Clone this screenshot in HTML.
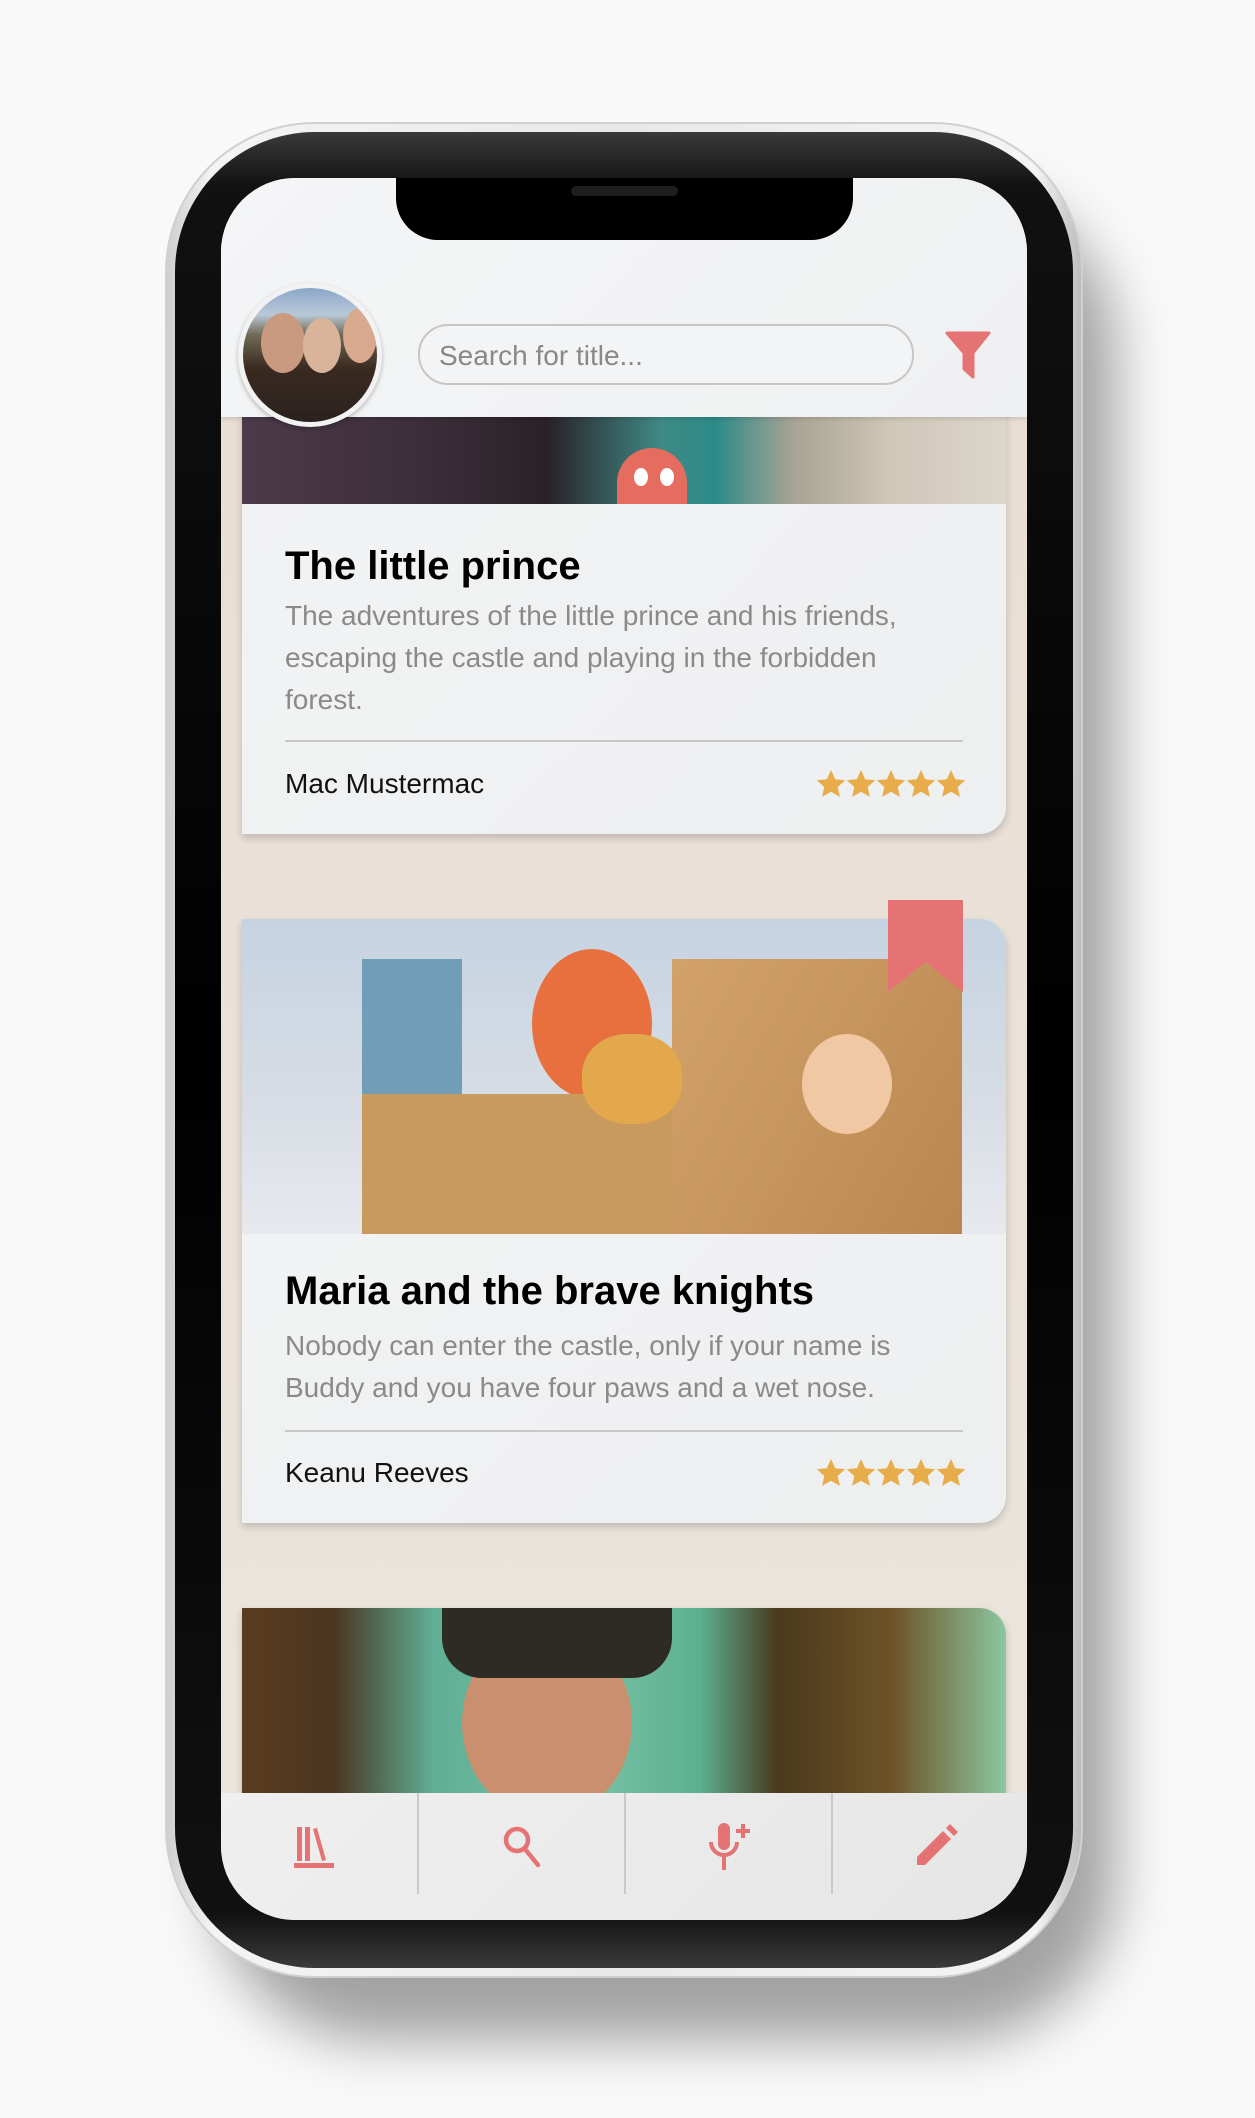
<!DOCTYPE html>
<html><head><meta charset="utf-8"><style>
*{margin:0;padding:0;box-sizing:border-box}
body{width:1255px;height:2118px;background:#f9f9f9;position:relative;overflow:hidden;font-family:"Liberation Sans",sans-serif}
.abs{position:absolute}
.shadow{left:215px;top:190px;width:900px;height:1850px;border-radius:160px;background:rgba(0,0,0,0.35);filter:blur(28px)}
.frame{left:165px;top:122px;width:918px;height:1856px;border-radius:150px;background:linear-gradient(90deg,#cfcfcf,#f4f4f4 5%,#e8e8e8 50%,#f4f4f4 95%,#bdbdbd);border:2px solid #d0d0d0}
.bezel{left:175px;top:132px;width:898px;height:1836px;border-radius:140px;background:linear-gradient(180deg,#3a3a3a,#111 3%,#000 50%,#111 97%,#3a3a3a)}
.screen{left:221px;top:178px;width:806px;height:1742px;border-radius:74px;overflow:hidden;background:linear-gradient(180deg,#e8ddd2,#ebe5de)}
.card{position:absolute;left:21px;width:764px;background:linear-gradient(135deg,#f2f3f4,#eeeff0);box-shadow:0 4px 8px rgba(0,0,0,0.18);overflow:hidden}
.title{position:absolute;left:43px;font-weight:bold;font-size:40px;color:#000;white-space:nowrap}
.desc{position:absolute;left:43px;width:665px;font-size:28px;line-height:42px;color:#8a8a8a}
.div{position:absolute;left:43px;width:678px;height:2px;background:#c8c8c8}
.author{position:absolute;left:43px;font-size:28px;color:#111}
.stars{position:absolute;left:574px}
.nav{left:0;top:1615px;width:806px;height:127px;background:linear-gradient(135deg,#efefef,#e6e6e6)}
.sep{position:absolute;top:0;width:2px;height:101px;background:#c9c9c9}
</style></head><body>
<div class="abs shadow"></div>
<div class="abs frame"></div>
<div class="abs bezel"></div>
<div class="abs screen">
  <div class="card" style="top:180px;height:476px;border-radius:0 0 27px 0">
    <div style="position:absolute;left:0;top:0;width:764px;height:146px;background:linear-gradient(90deg,#4d3a4a 0%,#3a2d38 25%,#2a2228 40%,#3f8a86 55%,#2c8b88 62%,#a8a394 72%,#cfc7b8 85%,#dcd6cb 100%)">
      <div style="position:absolute;left:375px;top:90px;width:70px;height:56px;border-radius:35px 35px 0 0;background:#e46d5f"></div>
      <div style="position:absolute;left:392px;top:110px;width:14px;height:18px;border-radius:50%;background:#fff"></div>
      <div style="position:absolute;left:418px;top:110px;width:14px;height:18px;border-radius:50%;background:#fff"></div>
    </div>
    <div class="title" style="top:186px">The little prince</div>
    <div class="desc" style="top:237px">The adventures of the little prince and his friends, escaping the castle and playing in the forbidden forest.</div>
    <div class="div" style="top:382px"></div>
    <div class="author" style="top:410px">Mac Mustermac</div>
    <svg class="stars" style="top:411px" width="150" height="30" viewBox="0 0 150 30"><g fill="#e8ad4a"><path id="s" d="M15 1l4.2 9.2 10 1-7.5 6.8 2.2 9.9L15 22.8 6.1 27.9l2.2-9.9L.8 11.2l10-1z"/><use href="#s" x="30"/><use href="#s" x="60"/><use href="#s" x="90"/><use href="#s" x="120"/></g></svg>
  </div>
  <div class="card" style="top:741px;height:604px;border-radius:0 27px 27px 0">
    <div style="position:absolute;left:0;top:0;width:764px;height:315px;background:linear-gradient(180deg,#c6d3e2,#d8dde5 60%,#e7e9ee)">
      <div style="position:absolute;left:120px;top:40px;width:100px;height:140px;background:#6f9eb6"></div>
      <div style="position:absolute;left:290px;top:30px;width:120px;height:150px;border-radius:50%;background:#e7703e"></div>
      <div style="position:absolute;left:120px;top:175px;width:380px;height:140px;background:#c89a5e"></div>
      <div style="position:absolute;left:430px;top:40px;width:290px;height:275px;background:linear-gradient(120deg,#d3a26a,#b98650)"></div>
      <div style="position:absolute;left:560px;top:115px;width:90px;height:100px;border-radius:50%;background:#f1c8a4"></div>
      <div style="position:absolute;left:340px;top:115px;width:100px;height:90px;border-radius:45%;background:#e3a84c"></div>
    </div>
    <div class="title" style="top:350px">Maria and the brave knights</div>
    <div class="desc" style="top:406px">Nobody can enter the castle, only if your name is Buddy and you have four paws and a wet nose.</div>
    <div class="div" style="top:511px"></div>
    <div class="author" style="top:538px">Keanu Reeves</div>
    <svg class="stars" style="top:539px" width="150" height="30" viewBox="0 0 150 30"><g fill="#e8ad4a"><path id="t" d="M15 1l4.2 9.2 10 1-7.5 6.8 2.2 9.9L15 22.8 6.1 27.9l2.2-9.9L.8 11.2l10-1z"/><use href="#t" x="30"/><use href="#t" x="60"/><use href="#t" x="90"/><use href="#t" x="120"/></g></svg>
  </div>
  <svg class="abs" style="left:667px;top:722px" width="75" height="92" viewBox="0 0 75 92"><path d="M0 0H75V92L37.5 62L0 92Z" fill="#e57373"/></svg>
  <div class="card" style="top:1430px;height:260px;border-radius:0 27px 0 0;background:linear-gradient(90deg,#5a3d1f 0%,#4a3520 12%,#5fae95 25%,#79c2a5 45%,#5bb090 60%,#4a3a1e 70%,#6d5226 85%,#8bc7a0 100%)">
    <div style="position:absolute;left:220px;top:20px;width:170px;height:190px;border-radius:50%;background:#c98f6f"></div>
    <div style="position:absolute;left:200px;top:0;width:230px;height:70px;border-radius:0 0 40px 40px;background:#2e2a24"></div>
  </div>
  <div class="abs" style="left:0;top:0;width:806px;height:239px;background:linear-gradient(135deg,#f4f5f6,#eff0f1);box-shadow:0 2px 4px rgba(0,0,0,0.12)"></div>
  <div class="abs" style="left:175px;top:0;width:457px;height:62px;background:#000;border-radius:0 0 42px 42px"></div>
  <div class="abs" style="left:350px;top:8px;width:107px;height:10px;background:#1e1e1e;border-radius:5px"></div>
  <div class="abs" style="left:17px;top:105px;width:144px;height:144px;border-radius:50%;background:#f2f2f2;box-shadow:0 2px 5px rgba(0,0,0,0.25)"></div>
  <div class="abs" style="left:22px;top:110px;width:134px;height:134px;border-radius:50%;overflow:hidden;background:linear-gradient(180deg,#8aa7c9 0%,#b9c8d6 20%,#6e6a55 35%,#3a2a20 60%,#2a2220 100%)">
    <div style="position:absolute;left:18px;top:25px;width:44px;height:60px;border-radius:50%;background:#c99a7f"></div>
    <div style="position:absolute;left:60px;top:30px;width:38px;height:55px;border-radius:50%;background:#d9b49a"></div>
    <div style="position:absolute;left:100px;top:20px;width:34px;height:55px;border-radius:50%;background:#d8a98f"></div>
  </div>
  <div class="abs" style="left:197px;top:146px;width:496px;height:61px;border:2px solid #c6c6c6;border-radius:30px;background:#f3f4f5"></div>
  <div class="abs" style="left:218px;top:162px;font-size:28px;color:#888">Search for title...</div>
  <svg class="abs" style="left:724px;top:153px" width="46" height="48" viewBox="0 0 46 48"><path d="M2 2H44L28 22V46L19 38V22Z" fill="#e57373" stroke="#e57373" stroke-width="3" stroke-linejoin="round"/></svg>
  <div class="abs nav">
    <div class="sep" style="left:196px"></div>
    <div class="sep" style="left:403px"></div>
    <div class="sep" style="left:610px"></div>
    <svg class="abs" style="left:72px;top:32px" width="44" height="44" viewBox="0 0 44 44" fill="#e57373"><rect x="4" y="2" width="5" height="34"/><rect x="12" y="2" width="5" height="34"/><path d="M20 4l4-1 9 32-4 1z"/><rect x="1" y="38" width="40" height="5"/></svg>
    <svg class="abs" style="left:280px;top:31px" width="44" height="46" viewBox="0 0 44 46" fill="none" stroke="#e57373" stroke-width="4.5" stroke-linecap="round"><circle cx="16" cy="16" r="11"/><path d="M24 25L37 41"/></svg>
    <svg class="abs" style="left:484px;top:29px" width="48" height="50" viewBox="0 0 48 50"><rect x="13" y="1" width="12" height="27" rx="6" fill="#e57373"/><path d="M6 20a13 13 0 0 0 26 0M19 34V48" fill="none" stroke="#e57373" stroke-width="4"/><path d="M38 2V16M31 9H45" stroke="#e57373" stroke-width="4"/></svg>
    <svg class="abs" style="left:692px;top:30px" width="46" height="46" viewBox="0 0 46 46" fill="#e57373"><path d="M4 34L30 8L38 16L12 42H4Z"/><path d="M33 5L37 1L45 9L41 13Z"/></svg>
  </div>
</div>
</body></html>
